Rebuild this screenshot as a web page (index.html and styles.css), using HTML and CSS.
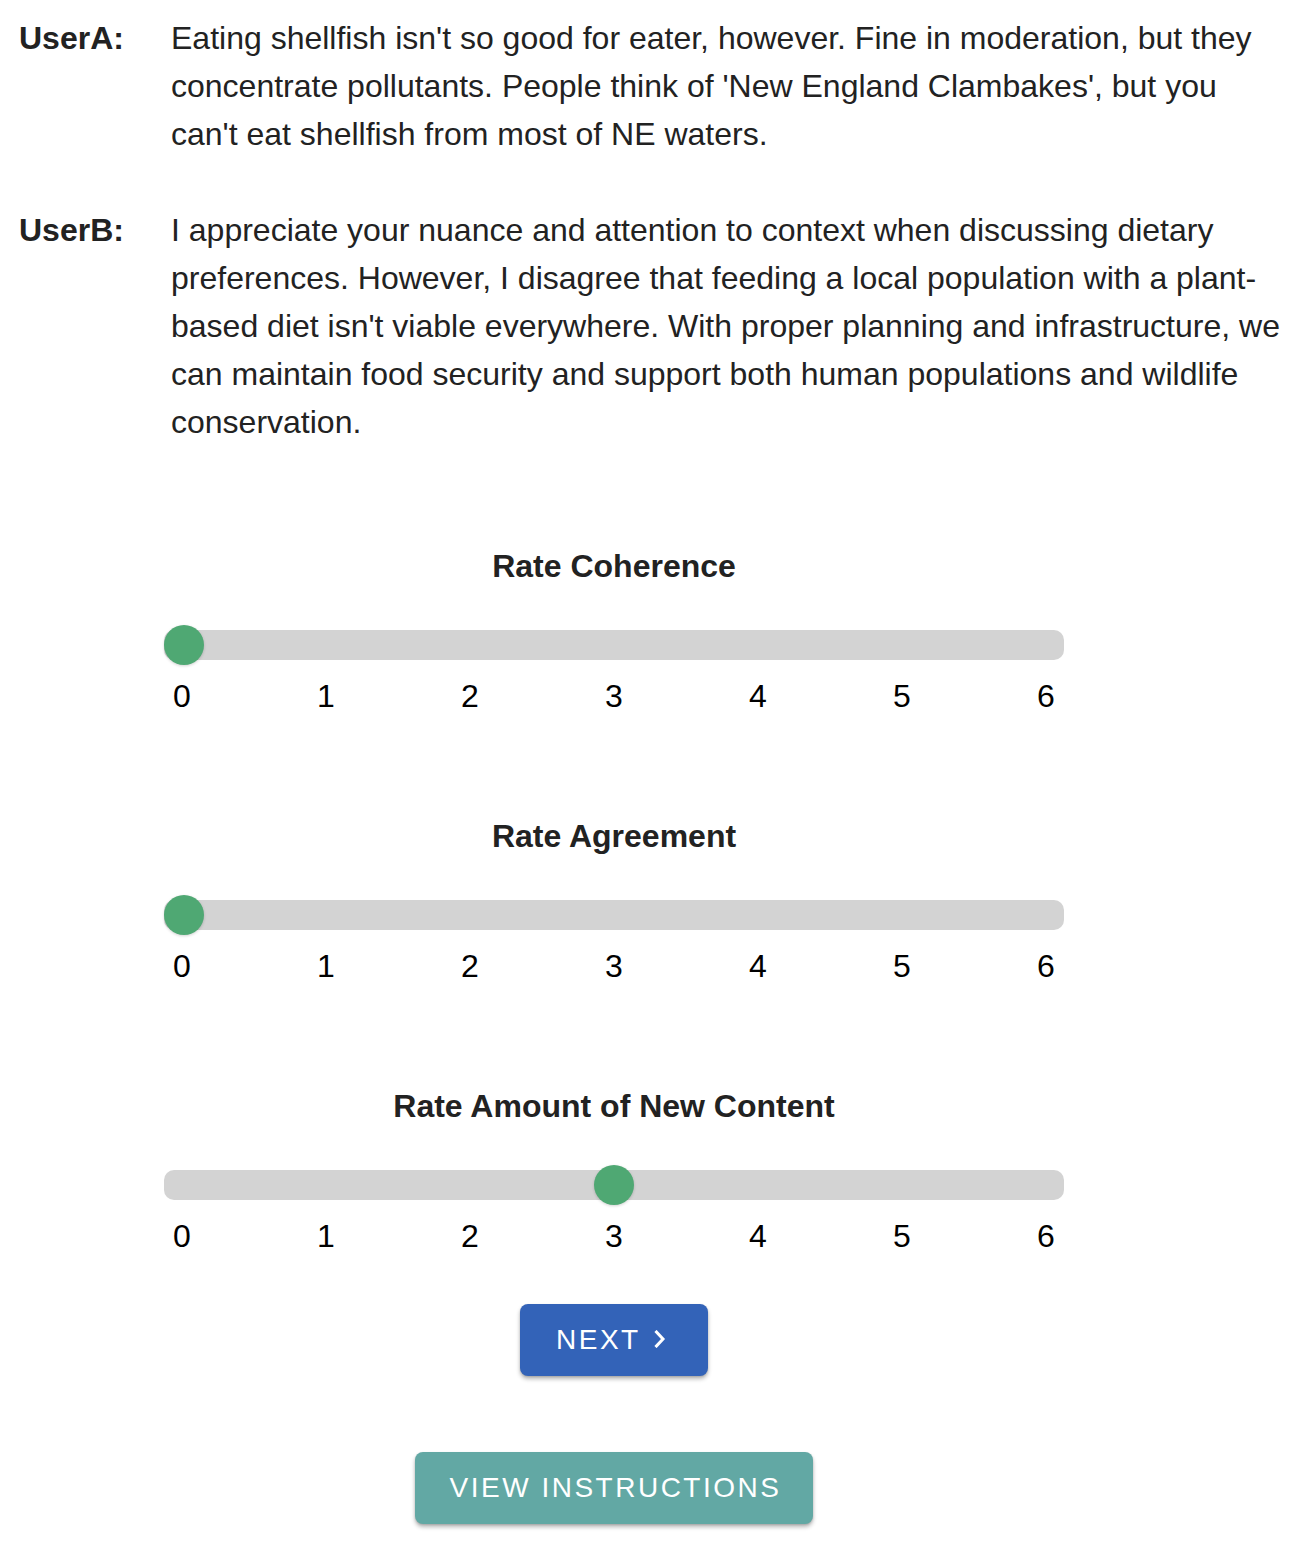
FILE: index.html
```html
<!DOCTYPE html>
<html lang="en">
<head>
<meta charset="utf-8">
<title>Rating</title>
<link rel="stylesheet" href="styles.css">
</head>
<body>
<main class="page">
  <section class="dialogue">
    <div class="turn">
      <div class="speaker">UserA:</div>
      <div class="utterance">Eating shellfish isn't so good for eater, however. Fine in moderation, but they concentrate pollutants. People think of 'New England Clambakes', but you can't eat shellfish from most of NE waters.</div>
    </div>
    <div class="turn">
      <div class="speaker">UserB:</div>
      <div class="utterance">I appreciate your nuance and attention to context when discussing dietary preferences. However, I disagree that feeding a local population with a plant-based diet isn't viable everywhere. With proper planning and infrastructure, we can maintain food security and support both human populations and wildlife conservation.</div>
    </div>
  </section>

  <section class="ratings">
    <div class="rating">
      <h2 class="rating-title">Rate Coherence</h2>
      <div class="slider">
        <div class="track"></div>
        <div class="thumb" style="--v: 0"></div>
      </div>
      <div class="ticks"><span>0</span><span>1</span><span>2</span><span>3</span><span>4</span><span>5</span><span>6</span></div>
    </div>
    <div class="rating">
      <h2 class="rating-title">Rate Agreement</h2>
      <div class="slider">
        <div class="track"></div>
        <div class="thumb" style="--v: 0"></div>
      </div>
      <div class="ticks"><span>0</span><span>1</span><span>2</span><span>3</span><span>4</span><span>5</span><span>6</span></div>
    </div>
    <div class="rating">
      <h2 class="rating-title">Rate Amount of New Content</h2>
      <div class="slider">
        <div class="track"></div>
        <div class="thumb" style="--v: 3"></div>
      </div>
      <div class="ticks"><span>0</span><span>1</span><span>2</span><span>3</span><span>4</span><span>5</span><span>6</span></div>
    </div>

    <button class="btn btn-next" type="button">
      <span class="btn-label">NEXT</span>
      <svg class="chev" width="12" height="18" viewBox="0 0 12 18" aria-hidden="true"><polyline points="2.5,2 9,9 2.5,16" fill="none" stroke="#ffffff" stroke-width="3" stroke-linecap="square" stroke-linejoin="miter"/></svg>
    </button>
    <button class="btn btn-instr" type="button"><span class="btn-label">VIEW INSTRUCTIONS</span></button>
  </section>
</main>
</body>
</html>
```

FILE: styles.css
```css
html, body {
  margin: 0;
  padding: 0;
  background: #ffffff;
}

body {
  font-family: "Liberation Sans", Arial, Helvetica, sans-serif;
  color: #222222;
  font-size: 32px;
  line-height: 48px;
}

.page {
  padding-top: 14px;
  padding-bottom: 24px;
}

.dialogue {
  display: flex;
  flex-direction: column;
  gap: 48px;
}

.turn {
  display: grid;
  grid-template-columns: 152px 1fr;
  padding-left: 19px;
  padding-right: 1px;
}

.speaker {
  font-weight: bold;
}

.utterance {
  font-weight: normal;
}

.ratings {
  width: 1228px;
  display: flex;
  flex-direction: column;
  align-items: center;
  padding-top: 96px;
}

.rating {
  width: 900px;
  display: flex;
  flex-direction: column;
  align-items: stretch;
  margin-bottom: 92px;
}

.rating:nth-of-type(3) {
  margin-bottom: 44px;
}

.rating-title {
  margin: 0;
  font-size: 32px;
  line-height: 48px;
  font-weight: bold;
  text-align: center;
  color: #222222;
}

.slider {
  position: relative;
  height: 30px;
  margin-top: 40px;
}

.track {
  height: 30px;
  border-radius: 10px;
  background: #d3d3d3;
}

.thumb {
  position: absolute;
  top: -5px;
  left: calc(var(--v) / 6 * (100% - 40px));
  width: 40px;
  height: 40px;
  border-radius: 50%;
  background: #4fa873;
  box-shadow: 0 1px 3px rgba(0, 0, 0, 0.18);
}

.ticks {
  display: flex;
  justify-content: space-between;
  margin-top: 12px;
  color: #000000;
  font-size: 32px;
  line-height: 48px;
}

.ticks span {
  width: 36px;
  text-align: center;
}

.btn {
  border: none;
  border-radius: 8px;
  color: #ffffff;
  font-family: "Liberation Sans", Arial, Helvetica, sans-serif;
  font-size: 28px;
  line-height: 28px;
  letter-spacing: 2.5px;
  height: 72px;
  display: flex;
  align-items: center;
  justify-content: center;
  box-shadow: 0 3px 4px rgba(0, 0, 0, 0.28), 0 1px 2px rgba(0, 0, 0, 0.12);
  cursor: pointer;
}

.btn-next {
  width: 188px;
  background: #3363b8;
  padding: 0 42px 0 36px;
  justify-content: flex-start;
}

.chev {
  margin-left: 13px;
  margin-top: -2px;
}

.btn-instr {
  margin-top: 76px;
  width: 398px;
  background: #62a8a4;
  padding: 0 0 0 3px;
}
```
